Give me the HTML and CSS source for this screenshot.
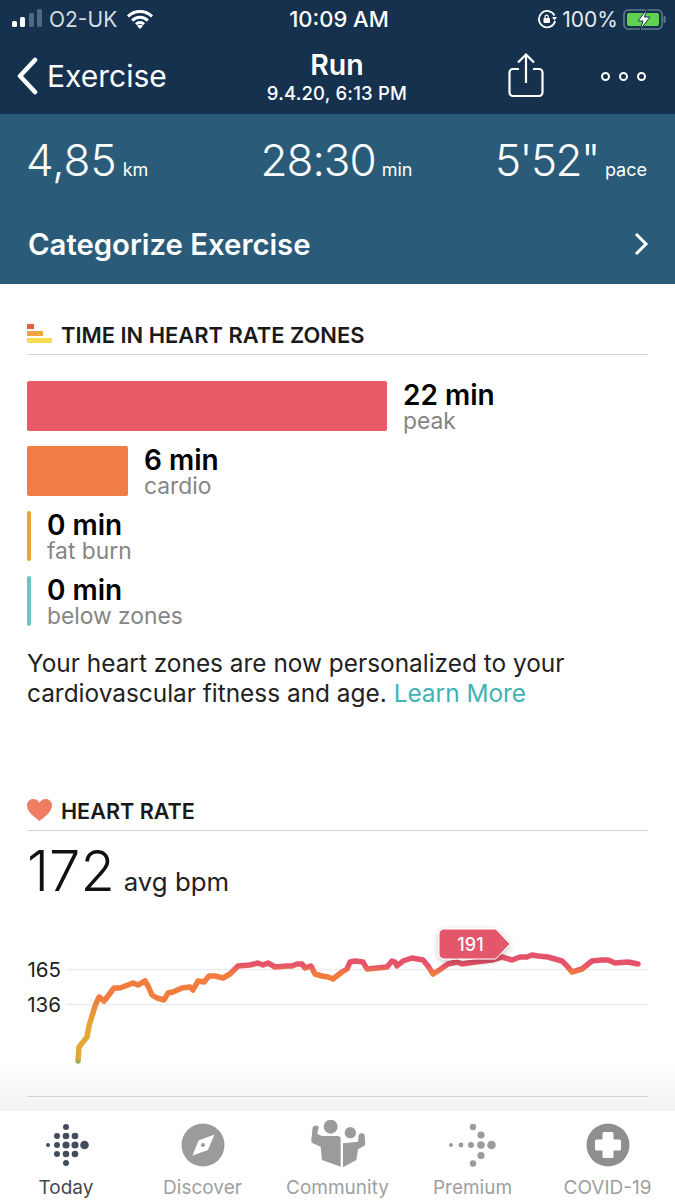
FILE: index.html
```html
<!DOCTYPE html>
<html lang="en">
<head>
  <meta charset="UTF-8">
  <title>Run</title>
  <link rel="stylesheet" href="styles.css">
</head>
<body>

<header class="top">
  <div class="status">
    <div class="status-left">
      <svg class="signal" width="31" height="20" viewBox="0 0 31 20">
        <rect x="0" y="13" width="5" height="6" rx="1.5" fill="#fff"/>
        <rect x="8" y="9" width="5" height="10" rx="1.5" fill="#fff"/>
        <rect x="17" y="5" width="5" height="14" rx="1.5" fill="#4f6a80"/>
        <rect x="25" y="1" width="5" height="18" rx="1.5" fill="#4f6a80"/>
      </svg>
      <span>O2-UK</span>
      <svg class="wifi" width="28" height="20" viewBox="0 0 28 20">
        <path d="M2 7.5a17 17 0 0 1 24 0M6.2 11.6a11 11 0 0 1 15.6 0M10 15.2a5.6 5.6 0 0 1 8 0" fill="none" stroke="#fff" stroke-width="3"/>
        <path d="M14 20l-3-3a4.2 4.2 0 0 1 6 0z" fill="#fff"/>
      </svg>
    </div>
    <div class="status-time">10:09 AM</div>
    <div class="status-right">
      <svg width="20" height="20" viewBox="0 0 20 20">
        <path d="M17.5 6.5a8.2 8.2 0 1 0 .6 5.5" fill="none" stroke="#fff" stroke-width="1.8"/>
        <path d="M15 8h5l-2.5 3.4z" fill="#fff"/>
        <rect x="6.5" y="9" width="6.5" height="5" rx="1" fill="#fff"/>
        <path d="M8 9.5V7.8a1.6 1.6 0 0 1 3.2 0v1.700" fill="none" stroke="#fff" stroke-width="1.200"/>
      </svg>
      <span>100%</span>
      <svg width="43" height="21" viewBox="0 0 43 21">
        <rect x="1" y="1" width="38" height="19" rx="4.500" fill="none" stroke="#5f7c8c" stroke-width="1.600"/>
        <rect x="4" y="4" width="32" height="13" rx="2" fill="#5fd24f"/>
        <rect x="40.500" y="7" width="2" height="7" rx="1" fill="#5f7c8c"/>
        <path d="M24 0l-9 12h5l-3 9 10-13h-5.500z" fill="#fff" stroke="#15314e" stroke-width="1"/>
      </svg>
    </div>
  </div>

  <nav class="nav">
    <div class="nav-back">
      <svg width="22" height="38" viewBox="0 0 22 38">
        <path d="M19 3L4 19l15 16" fill="none" stroke="#fff" stroke-width="4.500" stroke-linecap="round" stroke-linejoin="round"/>
      </svg>
      <span>Exercise</span>
    </div>
    <div class="nav-title">
      <div class="nav-run">Run</div>
      <div class="nav-date">9.4.20, 6:13 PM</div>
    </div>
    <div class="nav-actions">
      <svg class="share" width="36" height="44" viewBox="0 0 36 44">
        <path d="M11 16H5a3.500 3.500 0 0 0-3.500 3.500v20A3.500 3.500 0 0 0 5 43h26a3.500 3.500 0 0 0 3.500-3.500v-20A3.500 3.500 0 0 0 31 16h-6" fill="none" stroke="#fff" stroke-width="2.200"/>
        <path d="M18 30V2M10 9.500L18 1.500l8 8" fill="none" stroke="#fff" stroke-width="2.200"/>
      </svg>
      <div class="dots"><i></i><i></i><i></i></div>
    </div>
  </nav>
</header>

<section class="band">
  <div class="stats">
    <div class="stat stat-dist"><span class="stat-num">4,85</span><span class="stat-unit">km</span></div>
    <div class="stat stat-time"><span class="stat-num">28:30</span><span class="stat-unit">min</span></div>
    <div class="stat stat-pace"><span class="stat-num">5'52"</span><span class="stat-unit">pace</span></div>
  </div>
  <div class="categorize">
    <span>Categorize Exercise</span>
    <svg width="16" height="26" viewBox="0 0 16 26">
      <path d="M3 3l10 10L3 23" fill="none" stroke="#fff" stroke-width="3"/>
    </svg>
  </div>
</section>

<main class="content">
  <div class="heading heading-zones">
    <div class="zones-icon"><i class="zi-red"></i><i class="zi-orange"></i><i class="zi-yellow"></i></div>
    <h2>TIME IN HEART RATE ZONES</h2>
  </div>

  <div class="zones">
    <div class="zone">
      <div class="bar bar-peak"></div>
      <div class="zone-text"><b>22 min</b><span>peak</span></div>
    </div>
    <div class="zone">
      <div class="bar bar-cardio"></div>
      <div class="zone-text"><b>6 min</b><span>cardio</span></div>
    </div>
    <div class="zone">
      <div class="bar bar-fat"></div>
      <div class="zone-text"><b>0 min</b><span>fat burn</span></div>
    </div>
    <div class="zone">
      <div class="bar bar-below"></div>
      <div class="zone-text"><b>0 min</b><span>below zones</span></div>
    </div>
  </div>

  <p class="note">Your heart zones are now personalized to your cardiovascular fitness and age. <a href="#">Learn More</a></p>

  <div class="heading heading-heart">
    <svg width="25" height="22" viewBox="0 0 25 22">
      <path d="M12.500 22C9 19 0 13.500 0 6.500 0 2.500 3 0 6.300 0c2.700 0 5 1.500 6.200 3.800C13.700 1.500 16 0 18.700 0 22 0 25 2.500 25 6.500 25 13.500 16 19 12.500 22z" fill="#ee7d63"/>
    </svg>
    <h2>HEART RATE</h2>
  </div>

  <div class="avg"><span class="avg-num">172</span><span class="avg-unit">avg bpm</span></div>
</main>

<div class="chart">
  <!-- viewBox uses page coordinates -->
  <svg width="675" height="192" viewBox="0 920 675 192">
    <defs>
      <linearGradient id="hr" gradientUnits="userSpaceOnUse" x1="0" y1="950" x2="0" y2="1065">
        <stop offset="0" stop-color="#e5536a"/>
        <stop offset="0.14" stop-color="#e5536a"/>
        <stop offset="0.21" stop-color="#f27b3e"/>
        <stop offset="0.43" stop-color="#f27b3e"/>
        <stop offset="0.65" stop-color="#e6a835"/>
        <stop offset="0.95" stop-color="#dfa93a"/>
        <stop offset="1" stop-color="#7fa860"/>
      </linearGradient>
      <linearGradient id="fade" x1="0" y1="0" x2="0" y2="1">
        <stop offset="0" stop-color="#fff"/>
        <stop offset="1" stop-color="#f2f2f2"/>
      </linearGradient>
      <filter id="soft" x="-20%" y="-30%" width="140%" height="170%">
        <feDropShadow dx="0" dy="2" stdDeviation="3" flood-color="#000" flood-opacity="0.25"/>
      </filter>
    </defs>
    <rect x="0" y="1060" width="675" height="52" fill="url(#fade)"/>
    <line class="grid" x1="67" y1="970.500" x2="648" y2="970.500"/>
    <line class="grid" x1="67" y1="1005.500" x2="648" y2="1005.500"/>
    <line class="fold" x1="27" y1="1097.500" x2="648" y2="1097.500"/>
    <text class="axis" x="61" y="977.500" text-anchor="end">165</text>
    <text class="axis" x="61" y="1012.500" text-anchor="end">136</text>
    <polyline class="hr-line" stroke="url(#hr)" points="78,1062 79,1048 87,1038 89,1027 95,1007 99,998 104,1002 108,997 114,989 120,989 133,984 138,986 145,982 148,987 152,996 157,999 164,1001 168,994 173,993 182,989 190,988 193,991 198,982 204,983 209,977 215,977 223,979 230,975 238,967 250,966 258,964 263,966 268,964 275,968 287,967 292,967 297,965 302,965 305,969 311,967 315,975 322,977 328,978 333,980 342,973 347,970 350,963 355,962 363,963 367,970 377,969 387,968 392,962 395,963 397,967 403,962 412,959 423,961 428,967 433,975 438,972 448,965 457,963 462,965 475,963 492,961 502,958 512,961 520,958 527,958 532,956 538,957 548,958 562,962 567,967 572,973 582,970 592,962 602,961 608,961 615,964 628,963 638,965"/>
    <path class="badge" filter="url(#soft)" d="M444 930H494a4 4 0 0 1 3 1.200L510 945 497 958.800a4 4 0 0 1-3 1.200H444a5 5 0 0 1-5-5V935a5 5 0 0 1 5-5z"/>
    <text class="badge-text" x="470.500" y="952" text-anchor="middle">191</text>
  </svg>
</div>

<footer class="tabs">
  <div class="tab tab-on">
    <svg width="50" height="50" viewBox="-25 -25 50 50" fill="#434c5e">
      <circle cx="0" cy="-18" r="3"/>
      <circle cx="-9" cy="-9" r="3"/><circle cx="0" cy="-9" r="3.300"/><circle cx="9" cy="-9" r="3.300"/>
      <circle cx="-18" cy="0" r="2"/><circle cx="-9" cy="0" r="3"/><circle cx="0" cy="0" r="3.600"/><circle cx="9" cy="0" r="3.600"/><circle cx="18.500" cy="0" r="4.300"/>
      <circle cx="-9" cy="9" r="3"/><circle cx="0" cy="9" r="3.300"/><circle cx="9" cy="9" r="3.300"/>
      <circle cx="0" cy="18" r="3"/>
    </svg>
    <span>Today</span>
  </div>
  <div class="tab">
    <svg width="50" height="50" viewBox="-25 -25 50 50">
      <circle r="21.500" fill="#9b9b9b"/>
      <path d="M11.500-10.500L5 5-10.500 10.500-4.500-4.500z" fill="#fff"/>
      <circle r="2" fill="#9b9b9b"/>
    </svg>
    <span>Discover</span>
  </div>
  <div class="tab">
    <svg width="60" height="50" viewBox="20 20 180 150" fill="#9b9b9b">
      <circle cx="88" cy="40" r="21"/>
      <path d="M34 42q8-10 18-2l-4 22 14 6h46q10 0 10 10v82l-56-20-4-40-24-10q-5-3-4-10z"/>
      <circle cx="147" cy="58" r="17"/>
      <path d="M125 90l45-5 2-20q8-12 18 0l2 30-22 13-5 32-40 22z"/>
    </svg>
    <span>Community</span>
  </div>
  <div class="tab">
    <svg width="50" height="50" viewBox="-25 -25 50 50" fill="#9b9b9b">
      <circle cx="0" cy="-18" r="3.200"/>
      <circle cx="8" cy="-10" r="3.600"/>
      <circle cx="-22" cy="0" r="2"/><circle cx="-12" cy="0" r="2.400"/><circle cx="-2" cy="0" r="3"/><circle cx="8" cy="0" r="3.800"/><circle cx="18.500" cy="0" r="4.300"/>
      <circle cx="8" cy="10.500" r="3.600"/>
      <circle cx="0" cy="18.500" r="3.200"/>
    </svg>
    <span>Premium</span>
  </div>
  <div class="tab">
    <svg width="50" height="50" viewBox="-25 -25 50 50">
      <circle r="21.500" fill="#8f8f8f"/>
      <path d="M-4-13h8a1.500 1.500 0 0 1 1.500 1.500V-5.500H11.500A1.500 1.500 0 0 1 13-4V4a1.500 1.500 0 0 1-1.500 1.500H5.500V11.500A1.500 1.500 0 0 1 4 13H-4a1.500 1.500 0 0 1-1.500-1.500V5.500H-11.500A1.500 1.500 0 0 1-13 4V-4a1.500 1.500 0 0 1 1.500-1.500H-5.500V-11.500A1.500 1.500 0 0 1-4-13z" fill="#fff"/>
    </svg>
    <span>COVID-19</span>
  </div>
</footer>

</body>
</html>
```

FILE: styles.css
```css
* { box-sizing: border-box; }
html, body { margin: 0; padding: 0; }
body {
  width: 675px;
  height: 1200px;
  overflow: hidden;
  display: flex;
  flex-direction: column;
  background: #fff;
  color: #111;
  font-family: Inter, "Open Sans", sans-serif;
}
svg { display: block; }

/* top bars */
.top { height: 114px; background: #15314e; color: #fff; flex: none; }
.status {
  height: 38px;
  padding: 0 9px 0 12px;
  display: grid;
  grid-template-columns: 1fr auto 1fr;
  align-items: center;
  font-size: 21px;
}
.status-left { display: flex; align-items: center; gap: 6px; }
.status-left span { color: #d5dde3; }
.status-left .wifi { margin-left: 3px; }
.status-left .signal { margin-bottom: 3px; }
.status-time { font-size: 22px; font-weight: 500; }
.status-right { display: flex; align-items: center; justify-content: flex-end; gap: 5px; color: #e6ebef; }

.nav {
  height: 76px;
  padding: 0 29px 0 28px;
  display: grid;
  grid-template-columns: 1fr auto 1fr;
  align-items: center;
}
.nav-back { display: flex; align-items: center; gap: 9px; font-size: 30px; margin-left: -12px; }
.nav-title { text-align: center; }
.nav-run { font-size: 28.500px; font-weight: 600; line-height: 34px; }
.nav-date { font-size: 18.500px; font-weight: 500; line-height: 22px; letter-spacing: 0.2px; }
.nav-actions { display: flex; align-items: center; justify-content: flex-end; gap: 57px; }
.share { margin-bottom: 2px; }
.dots { display: flex; gap: 9px; }
.dots i { display: block; width: 9px; height: 9px; border: 2px solid #fff; border-radius: 50%; }

/* stats band */
.band { height: 170px; background: #2a5b78; color: #fff; flex: none; padding: 0 28px; }
.stats {
  height: 92px;
  margin-left: -2px;
  display: grid;
  grid-template-columns: 234.500px 234.500px auto;
  align-items: baseline;
  padding-top: 19px;
}
.stat-num { font-size: 44px; font-weight: 300; }
.stat-unit { font-size: 18px; margin-left: 6px; }
.stat-time .stat-num { letter-spacing: -1px; }
.stat-pace .stat-num { letter-spacing: -1.500px; }
.stat-pace .stat-unit { margin-left: 6px; }
.categorize { display: flex; align-items: center; justify-content: space-between; height: 76px; font-size: 29.300px; font-weight: 600; }
.categorize svg { margin-right: -2px; }

/* zones */
.content { padding: 0 27px; flex: none; }
.heading { display: flex; align-items: center; gap: 9px; border-bottom: 1px solid #d5d5d5; }
.heading h2 { margin: 0; font-size: 21.900px; font-weight: 600; color: #1a1a1a; }
.heading-zones { margin-top: 31px; height: 40px; padding-top: 1px; }
.zones-icon { width: 25px; display: flex; flex-direction: column; gap: 2px; margin-bottom: 3px; }
.zones-icon i { display: block; height: 5px; }
.zi-red { width: 7px; background: #ec5a44; }
.zi-orange { width: 16px; background: #f2a53f; }
.zi-yellow { width: 25px; background: #fadc4f; }

.zones { margin-top: 26px; display: flex; flex-direction: column; gap: 15px; }
.zone { display: flex; height: 50px; align-items: center; gap: 16px; }
.bar { height: 50px; border-radius: 2px; }
.bar-peak { width: 360px; background: #e95a69; }
.bar-cardio { width: 101px; background: #f07e44; }
.bar-fat { width: 4px; background: #e6a835; }
.bar-below { width: 4px; background: #6cc4c4; }
.zone-text { display: flex; flex-direction: column; padding-top: 1px; }
.zone-text b { font-size: 28px; font-weight: 600; line-height: 29px; color: #000; }
.zone-text span { font-size: 22.800px; line-height: 22px; color: #858585; }

.note { margin: 22px 0 0; font-size: 24.400px; line-height: 30px; color: #222; }
.note a { color: #3fb3b3; text-decoration: none; }

.heading-heart { margin-top: 85px; height: 38px; padding-bottom: 2px; }
.heading-heart h2 { font-size: 21.600px; }
.heading-heart svg { margin-bottom: 2px; }
.avg { display: flex; align-items: baseline; gap: 9px; margin-top: 6px; height: 82px; }
.avg-num { font-size: 56px; font-weight: 300; color: #111; }
.avg-unit { font-size: 25.800px; font-weight: 400; color: #222; }

/* chart */
.chart { flex: 1; min-height: 0; overflow: hidden; }
.grid { stroke: #ececf0; stroke-width: 1.500; }
.fold { stroke: #d2d2d2; stroke-width: 1; }
.axis { font-size: 20.500px; fill: #222; }
.hr-line { fill: none; stroke-width: 5.500; stroke-linejoin: round; stroke-linecap: round; }
.badge { fill: #e45669; stroke: #fff; stroke-width: 1; }
.badge-text { font-size: 18px; font-weight: 500; fill: #fff; }

/* tab bar */
.tabs {
  height: 88px;
  flex: none;
  display: grid;
  grid-template-columns: repeat(5, 1fr);
  background: #fff;
  padding-top: 8px;
}
.tab { display: flex; flex-direction: column; align-items: center; color: #a0a0a0; font-size: 19px; }
.tab svg { height: 50px; }
.tab span { margin-top: 6px; white-space: nowrap; }
.tab-on { color: #3f4754; margin-left: -3px; }
```
